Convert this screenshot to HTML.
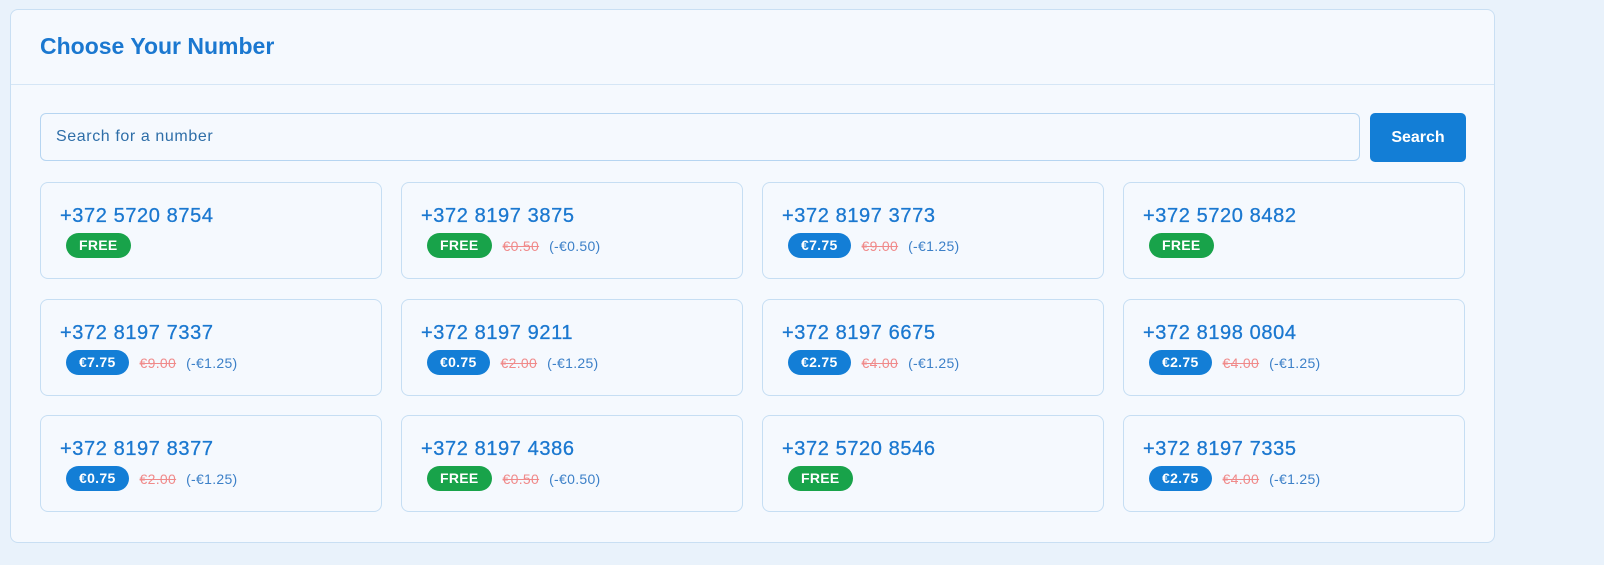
<!DOCTYPE html>
<html><head><style>
body{margin:0;background:#e9f2fb;font-family:"Liberation Sans",sans-serif;width:1604px;height:565px;overflow:hidden}
.wrap{position:absolute;left:10px;top:9px;width:1485px;height:534px;background:#f5f9fe;border:1px solid #c9dff3;border-radius:8px;box-sizing:border-box}
.hd{height:75px;border-bottom:1px solid #d5e6f6;box-sizing:border-box}
.hd h1{margin:0;position:absolute;left:29px;top:23px;font-size:23px;color:#1b78d0;font-weight:bold;letter-spacing:0}
.inp{position:absolute;left:29px;top:103px;width:1320px;height:48px;border:1px solid #b6d5f1;border-radius:6px;box-sizing:border-box;background:#f5f9fe;font-size:16px;color:#2e6ea8;padding:14px 15px;letter-spacing:0.6px}
.btn{position:absolute;left:1359px;top:103px;width:96px;height:49px;background:#137ed6;border-radius:5px;color:#fff;font-size:16px;font-weight:bold;text-align:center;line-height:49px}
.c{position:absolute;width:342px;height:97px;border:1px solid #c6def3;border-radius:8px;box-sizing:border-box;background:#f5f9fe}
.n{position:absolute;left:19px;top:22px;font-size:20px;color:#1b78d0;letter-spacing:0.6px;-webkit-text-stroke:0.3px #1b78d0}
.r{position:absolute;left:25px;top:50px;display:flex;align-items:center;font-size:14px;letter-spacing:0.3px}
.b{height:25px;border-radius:13px;color:#fff;font-weight:bold;font-size:14px;line-height:25px;padding:0 13px;margin-right:11px}
.g{background:#18a34a}.bl{background:#137ed6}
.s{color:#f08a8a;text-decoration:line-through;margin-right:10px}
.d{color:#3c80c8}
</style></head><body>
<div class="wrap">
<div class="hd"><h1>Choose Your Number</h1></div>
<div class="inp">Search for a number</div>
<div class="btn">Search</div>

<div class="c" style="left:29px;top:172px"><div class="n">+372 5720 8754</div><div class="r"><span class="b g">FREE</span></div></div>
<div class="c" style="left:390px;top:172px"><div class="n">+372 8197 3875</div><div class="r"><span class="b g">FREE</span><span class="s">€0.50</span><span class="d">(-€0.50)</span></div></div>
<div class="c" style="left:751px;top:172px"><div class="n">+372 8197 3773</div><div class="r"><span class="b bl">€7.75</span><span class="s">€9.00</span><span class="d">(-€1.25)</span></div></div>
<div class="c" style="left:1112px;top:172px"><div class="n">+372 5720 8482</div><div class="r"><span class="b g">FREE</span></div></div>

<div class="c" style="left:29px;top:289px"><div class="n">+372 8197 7337</div><div class="r"><span class="b bl">€7.75</span><span class="s">€9.00</span><span class="d">(-€1.25)</span></div></div>
<div class="c" style="left:390px;top:289px"><div class="n">+372 8197 9211</div><div class="r"><span class="b bl">€0.75</span><span class="s">€2.00</span><span class="d">(-€1.25)</span></div></div>
<div class="c" style="left:751px;top:289px"><div class="n">+372 8197 6675</div><div class="r"><span class="b bl">€2.75</span><span class="s">€4.00</span><span class="d">(-€1.25)</span></div></div>
<div class="c" style="left:1112px;top:289px"><div class="n">+372 8198 0804</div><div class="r"><span class="b bl">€2.75</span><span class="s">€4.00</span><span class="d">(-€1.25)</span></div></div>

<div class="c" style="left:29px;top:405px"><div class="n">+372 8197 8377</div><div class="r"><span class="b bl">€0.75</span><span class="s">€2.00</span><span class="d">(-€1.25)</span></div></div>
<div class="c" style="left:390px;top:405px"><div class="n">+372 8197 4386</div><div class="r"><span class="b g">FREE</span><span class="s">€0.50</span><span class="d">(-€0.50)</span></div></div>
<div class="c" style="left:751px;top:405px"><div class="n">+372 5720 8546</div><div class="r"><span class="b g">FREE</span></div></div>
<div class="c" style="left:1112px;top:405px"><div class="n">+372 8197 7335</div><div class="r"><span class="b bl">€2.75</span><span class="s">€4.00</span><span class="d">(-€1.25)</span></div></div>
</div>
</body></html>
